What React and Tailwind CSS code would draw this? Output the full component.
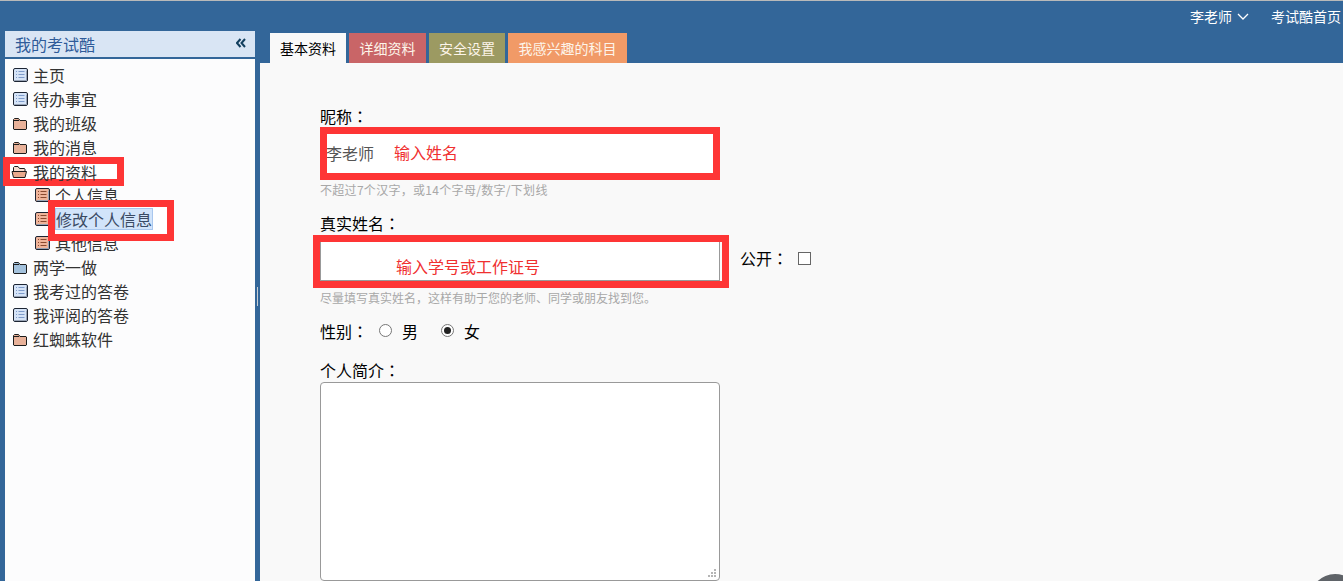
import React from 'react';

const cjk = { fontFamily: '"Noto Sans CJK SC", "Liberation Sans", sans-serif' };

// centred full-width colon, as the reference font draws it
function Colon() {
  return <span className="font-['Noto_Sans_CJK_TC']">：</span>;
}

function FileIcon({ fill = '#d5e3f7', line = '#7f9ccb' }) {
  return (
    <svg width="16" height="16" viewBox="0 0 16 16" className="shrink-0">
      <rect x="0.5" y="0.5" width="14" height="13" rx="1.500" fill={fill} stroke="#1c2433" />
      <path d="M13.500 2.500v10H2" fill="none" stroke="#98a3b5" />
      <path d="M3 3.500h1M3 6.500h1M3 9.500h1M5.500 3.500h6M5.500 6.500h6M5.500 9.500h6" stroke={line} strokeWidth="1" />
    </svg>
  );
}

function FolderIcon({ fill = '#e8b199' }) {
  return (
    <svg width="16" height="16" viewBox="1 0 16 16" className="shrink-0">
      <path d="M1.500 13V3.500l1-1h4l1.500 2h6l.5.5V13l-.5.5h-12z" fill={fill} stroke="#1c1c1c" />
      <path d="M2 4.500h5" stroke="#1c1c1c" />
    </svg>
  );
}

function OpenFolderIcon() {
  return (
    <svg width="17" height="16" viewBox="0 0 17 16" className="shrink-0">
      <path d="M2.500 7V3.500l1-1h3.500l1.500 2h5l.5.5v2" fill="#f6dccf" stroke="#1c1c1c" />
      <path d="M1 7.500h14.500l-1.500 6H2.500z" fill="#e8a98c" stroke="#1c1c1c" />
    </svg>
  );
}

function Row({ icon, children, sub }) {
  return (
    <div className={`flex h-6 items-center gap-[4px] text-[16px] text-[#333] whitespace-nowrap ${sub ? 'pl-[30px]' : 'pl-[8px]'}`}>
      {icon}
      <span className="pb-[2px]">{children}</span>
    </div>
  );
}

function Sidebar() {
  return (
    <aside className="relative w-[250px] ml-[5px] bg-[#fcfcfd] shrink-0">
      <div className="flex h-[28px] items-center justify-between border-b-2 border-[#336699] bg-[#d9e5f4] pl-[10px] pr-[9px] text-[16px] text-[#2f5b99]">
        <span>我的考试酷</span>
        <svg width="10" height="10" viewBox="0 0 10 10" className="mb-[2px]">
          <path d="M4.500 1 1 5l3.500 4M9 1 5.500 5 9 9" fill="none" stroke="#123f5e" strokeWidth="2" />
        </svg>
      </div>
      <div className="pt-[5px]">
        <Row icon={<FileIcon />}>主页</Row>
        <Row icon={<FileIcon />}>待办事宜</Row>
        <Row icon={<FolderIcon />}>我的班级</Row>
        <Row icon={<FolderIcon />}>我的消息</Row>
        <Row icon={<OpenFolderIcon />}>我的资料</Row>
        <Row sub icon={<FileIcon fill="#efb49a" line="#8a4a30" />}>个人信息</Row>
        <Row sub icon={<FileIcon fill="#efb49a" line="#8a4a30" />}>修改个人信息</Row>
        <Row sub icon={<FileIcon fill="#efb49a" line="#8a4a30" />}>其他信息</Row>
        <Row icon={<FolderIcon fill="#a3c1dc" />}>两学一做</Row>
        <Row icon={<FileIcon />}>我考过的答卷</Row>
        <Row icon={<FileIcon />}>我评阅的答卷</Row>
        <Row icon={<FolderIcon />}>红蜘蛛软件</Row>
      </div>
      {/* red annotation frames */}
      <div className="absolute left-[-2px] top-[126px] h-[29px] w-[121px] border-[7px] border-[#fe3535]">
        <div className="flex h-full items-center bg-white pl-[1px] text-[16px] text-[#333]">
          <span className="mr-[4px]"><OpenFolderIcon /></span>
          <span className="pl-[1px]">我的资料</span>
        </div>
      </div>
      <div className="absolute left-[43px] top-[169px] h-[41px] w-[126px] border-[7px] border-[#fe3535] bg-white">
        <div className="mt-[1px] h-[22px] w-[98px] border border-[#a9c7ee] bg-[#d2e4fa] text-[16px] leading-[20px] text-[#3a4a63] whitespace-nowrap">修改个人信息</div>
      </div>
    </aside>
  );
}

function Tab({ className, children }) {
  return <div className={`flex h-[30px] items-center justify-center text-[14px] ${className}`}>{children}</div>;
}

function Form() {
  return (
    <div className="flex-1 bg-[#f9f9f9] pl-[60px] pt-[44px] text-[16px] text-black">
      <div className="h-5 leading-[18px]">昵称<Colon /></div>
      <div className="relative h-[53px] w-[400px] bg-white">
        <input readOnly value="李老师" className="h-full w-full bg-white pb-[2px] pl-[6px] text-[16px] text-[#555] outline-none" />
        <div className="absolute inset-0 border-[7px] border-[#fe3535]" />
        <span className="absolute left-[74px] top-[13px] text-[16px] leading-6 text-[#f03030]">输入姓名</span>
      </div>
      <div className="h-5 text-[12px] leading-[19px] tracking-[0.3px] text-[#a8a8a8]">不超过7个汉字，或14个字母/数字/下划线</div>

      <div className="mt-[14px] h-5 leading-[18px]">真实姓名<Colon /></div>
      <div className="mt-[7px] flex items-center">
        <div className="relative h-[40px] w-[400px]">
          <input readOnly className="h-full w-full border border-[#999] bg-white outline-none" />
          <div className="absolute bottom-[-7px] left-[-7px] right-[-9px] top-[-6px] border-[7px] border-[#fe3535]" />
          <span className="absolute left-[76px] top-[13px] text-[16px] leading-6 text-[#f03030]">输入学号或工作证号</span>
        </div>
        <span className="mb-[6px] ml-[20px]">公开<Colon /></span>
        <span className="mb-[6px] ml-[10px] h-[13px] w-[13px] border border-[#666] bg-white" />
      </div>
      <div className="mt-[8px] h-[18px] text-[12px] leading-[18px] text-[#a8a8a8]">尽量填写真实姓名，这样有助于您的老师、同学或朋友找到您。</div>

      <div className="mt-[12px] flex h-6 items-center">
        <span>性别<Colon /></span>
        <span className="mb-[2px] ml-[11px] h-[13px] w-[13px] rounded-full border border-[#777] bg-white" />
        <span className="ml-[10px]">男</span>
        <span className="mb-[2px] ml-[23px] flex h-[13px] w-[13px] items-center justify-center rounded-full border border-[#777] bg-white">
          <span className="h-[7px] w-[7px] rounded-full bg-[#222]" />
        </span>
        <span className="ml-[10px]">女</span>
      </div>

      <div className="mt-[18px] h-5 leading-[18px]">个人简介<Colon /></div>
      <div className="relative mt-[1px] h-[199px] w-[400px]">
        <textarea readOnly className="block h-full w-full resize-none rounded-[4px] border border-[#999] bg-white outline-none" />
        <svg width="10" height="10" viewBox="0 0 10 10" className="absolute bottom-[2px] right-[2px]">
          <path d="M6 0h2v2H6zM3 3h2v2H3zM6 3h2v2H6zM0 6h2v2H0zM3 6h2v2H3zM6 6h2v2H6z" fill="#b5b5b5" />
        </svg>
      </div>
    </div>
  );
}

export default function App() {
  return (
    <div className="relative flex h-[581px] w-[1343px] flex-col overflow-hidden border-t border-[#b9b9b9] bg-[#336699]" style={cjk}>
      <header className="flex h-[30px] shrink-0 items-center justify-end pr-[2px] text-[14px] text-white">
        <span>李老师</span>
        <svg width="12" height="8" viewBox="0 0 12 8" className="ml-[5px] mt-[2px]">
          <path d="M1 1l5 5 5-5" fill="none" stroke="#fff" strokeWidth="1.300" />
        </svg>
        <span className="ml-[22px]">考试酷首页</span>
      </header>
      <div className="flex flex-1 min-h-0">
        <Sidebar />
        <div className="flex w-[5px] shrink-0 items-center pb-[20px]">
          <div className="ml-[2px] h-[19px] w-[1px] bg-[#c8cdd4]" />
        </div>
        <main className="flex min-w-0 flex-1 flex-col">
          <div className="mt-[2px] flex h-[30px] shrink-0 gap-[3px] pl-[10px]">
            <Tab className="w-[76px] bg-[#f9f9f9] text-black">基本资料</Tab>
            <Tab className="w-[77px] bg-[#c96567] text-[#fdf5ea]">详细资料</Tab>
            <Tab className="w-[76px] bg-[#9c9a62] text-[#fdf5ea]">安全设置</Tab>
            <Tab className="w-[119px] bg-[#f19a67] text-[#fdf5ea]">我感兴趣的科目</Tab>
          </div>
          <Form />
        </main>
      </div>
      {/* floating help button, cut off by the window edge */}
      <div className="absolute left-[1310px] top-[573px] h-[50px] w-[50px] rounded-full bg-[#5f6368]" />
    </div>
  );
}
